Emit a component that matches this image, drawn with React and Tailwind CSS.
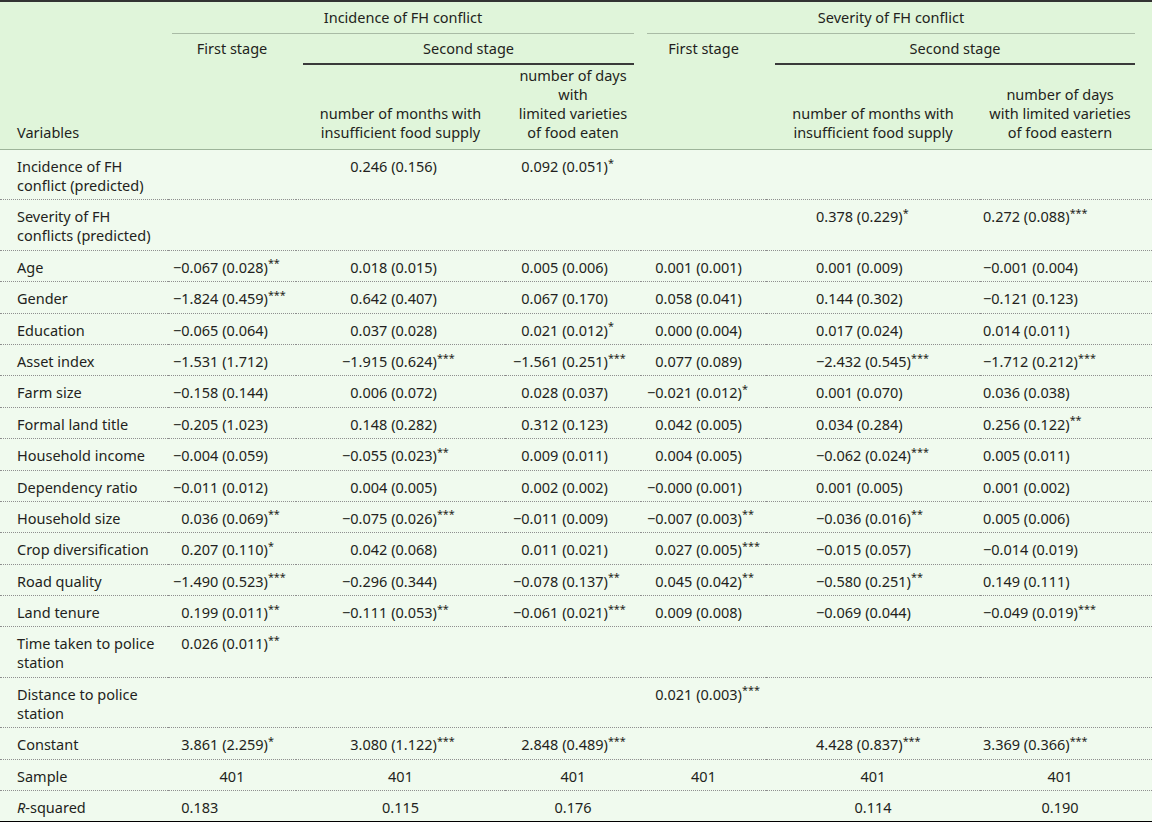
import React from 'react';

const MINUS = '\u2212';

const rows = [
  { label: ['Incidence of FH', 'conflict (predicted)'], v: ['', '0.246 (0.156)', '0.092 (0.051)*', '', '', ''] },
  { label: ['Severity of FH', 'conflicts (predicted)'], v: ['', '', '', '', '0.378 (0.229)*', '0.272 (0.088)***'] },
  { label: ['Age'], v: ['−0.067 (0.028)**', '0.018 (0.015)', '0.005 (0.006)', '0.001 (0.001)', '0.001 (0.009)', '−0.001 (0.004)'] },
  { label: ['Gender'], v: ['−1.824 (0.459)***', '0.642 (0.407)', '0.067 (0.170)', '0.058 (0.041)', '0.144 (0.302)', '−0.121 (0.123)'] },
  { label: ['Education'], v: ['−0.065 (0.064)', '0.037 (0.028)', '0.021 (0.012)*', '0.000 (0.004)', '0.017 (0.024)', '0.014 (0.011)'] },
  { label: ['Asset index'], v: ['−1.531 (1.712)', '−1.915 (0.624)***', '−1.561 (0.251)***', '0.077 (0.089)', '−2.432 (0.545)***', '−1.712 (0.212)***'] },
  { label: ['Farm size'], v: ['−0.158 (0.144)', '0.006 (0.072)', '0.028 (0.037)', '−0.021 (0.012)*', '0.001 (0.070)', '0.036 (0.038)'] },
  { label: ['Formal land title'], v: ['−0.205 (1.023)', '0.148 (0.282)', '0.312 (0.123)', '0.042 (0.005)', '0.034 (0.284)', '0.256 (0.122)**'] },
  { label: ['Household income'], v: ['−0.004 (0.059)', '−0.055 (0.023)**', '0.009 (0.011)', '0.004 (0.005)', '−0.062 (0.024)***', '0.005 (0.011)'] },
  { label: ['Dependency ratio'], v: ['−0.011 (0.012)', '0.004 (0.005)', '0.002 (0.002)', '−0.000 (0.001)', '0.001 (0.005)', '0.001 (0.002)'] },
  { label: ['Household size'], v: ['0.036 (0.069)**', '−0.075 (0.026)***', '−0.011 (0.009)', '−0.007 (0.003)**', '−0.036 (0.016)**', '0.005 (0.006)'] },
  { label: ['Crop diversification'], v: ['0.207 (0.110)*', '0.042 (0.068)', '0.011 (0.021)', '0.027 (0.005)***', '−0.015 (0.057)', '−0.014 (0.019)'] },
  { label: ['Road quality'], v: ['−1.490 (0.523)***', '−0.296 (0.344)', '−0.078 (0.137)**', '0.045 (0.042)**', '−0.580 (0.251)**', '0.149 (0.111)'] },
  { label: ['Land tenure'], v: ['0.199 (0.011)**', '−0.111 (0.053)**', '−0.061 (0.021)***', '0.009 (0.008)', '−0.069 (0.044)', '−0.049 (0.019)***'] },
  { label: ['Time taken to police', 'station'], v: ['0.026 (0.011)**', '', '', '', '', ''] },
  { label: ['Distance to police', 'station'], v: ['', '', '', '0.021 (0.003)***', '', ''] },
  { label: ['Constant'], v: ['3.861 (2.259)*', '3.080 (1.122)***', '2.848 (0.489)***', '', '4.428 (0.837)***', '3.369 (0.366)***'] },
];

// left padding per value column, and whether positives get a blank minus in front
const valueCols = [
  { pad: 'pl-[5px]', phantom: true },
  { pad: 'pl-[46px]', phantom: true },
  { pad: 'pl-[8px]', phantom: true },
  { pad: 'pl-[6px]', phantom: true },
  { pad: 'pl-[50px]', phantom: false },
  { pad: 'pl-[3px]', phantom: false },
];

function Val({ text, phantom }) {
  if (!text) return null;
  const m = text.match(/^(.*?)(\**)$/);
  const main = m[1];
  const stars = m[2];
  const neg = main.startsWith(MINUS);
  return (
    <span className="whitespace-nowrap">
      {phantom && !neg && <span className="invisible">{MINUS}</span>}
      {main}
      {stars && <sup>{stars}</sup>}
    </span>
  );
}

const cell = 'pt-[7px] pb-[4.4px] align-top border-b border-dotted border-[#8f8f8f]';
const last = 'pt-[7px] pb-[4.4px] align-top';

export default function App() {
  return (
    <div className="w-[1152px] bg-[#f0faee] border-t-2 border-b-[3px] border-t-[#333333] border-b-black font-['Noto_Sans',sans-serif] text-[14.5px] leading-[19px] text-[#231f20]">
      <table className="w-[1152px] table-fixed border-collapse">
        <colgroup>
          <col className="w-[168px]" />
          <col className="w-[128px]" />
          <col className="w-[209px]" />
          <col className="w-[136px]" />
          <col className="w-[125px]" />
          <col className="w-[214px]" />
          <col className="w-[172px]" />
        </colgroup>
        <thead className="bg-[#e0f5da]">
          <tr>
            <th rowSpan={3} className="align-bottom text-left font-normal pl-[17px] pb-[7px] border-b border-[#9db499]">
              Variables
            </th>
            <th colSpan={3} className="p-0 font-normal align-top">
              <div className="ml-[4px] mr-[7px] pt-[6px] pb-[6px] border-b border-[#a9bba5] text-center">
                Incidence of FH conflict
              </div>
            </th>
            <th colSpan={3} className="p-0 font-normal align-top">
              <div className="ml-[6px] mr-[17px] pt-[6px] pb-[6px] border-b border-[#a9bba5] text-center">
                Severity of FH conflict
              </div>
            </th>
          </tr>
          <tr>
            <th className="font-normal align-top pt-[5px] text-center">First stage</th>
            <th colSpan={2} className="p-0 font-normal align-top">
              <div className="ml-[7px] mr-[7px] pt-[5px] pb-[5px] border-b-2 border-[#3a3a3a] text-center">
                Second stage
              </div>
            </th>
            <th className="font-normal align-top pt-[5px] text-center">First stage</th>
            <th colSpan={2} className="p-0 font-normal align-top">
              <div className="ml-[9px] mr-[17px] pt-[5px] pb-[5px] border-b-2 border-[#3a3a3a] text-center">
                Second stage
              </div>
            </th>
          </tr>
          <tr>
            <th className="border-b border-[#9db499]" />
            <th className="font-normal align-bottom text-center pb-[7px] border-b border-[#9db499]">
              number of months with
              <br />
              insufficient food supply
            </th>
            <th className="font-normal align-bottom text-center pt-[1px] pb-[7px] border-b border-[#9db499]">
              number of days
              <br />
              with
              <br />
              limited varieties
              <br />
              of food eaten
            </th>
            <th className="border-b border-[#9db499]" />
            <th className="font-normal align-bottom text-center pb-[7px] border-b border-[#9db499]">
              number of months with
              <br />
              insufficient food supply
            </th>
            <th className="font-normal align-bottom text-center pr-[12px] pb-[7px] border-b border-[#9db499]">
              number of days
              <br />
              with limited varieties
              <br />
              of food eastern
            </th>
          </tr>
        </thead>
        <tbody>
          {rows.map((row) => (
            <tr key={row.label.join(' ')}>
              <td className={`${cell} pl-[17px] text-left`}>
                {row.label.map((l, i) => (
                  <div key={i}>{l}</div>
                ))}
              </td>
              {row.v.map((v, i) => (
                <td key={i} className={`${cell} ${valueCols[i].pad} text-left`}>
                  <Val text={v} phantom={valueCols[i].phantom} />
                </td>
              ))}
            </tr>
          ))}
          <tr>
            <td className={`${cell} pl-[17px] text-left`}>Sample</td>
            <td className={`${cell} text-center`}>401</td>
            <td className={`${cell} text-center`}>401</td>
            <td className={`${cell} text-center`}>401</td>
            <td className={`${cell} text-center`}>401</td>
            <td className={`${cell} text-center`}>401</td>
            <td className={`${cell} text-center pr-[12px]`}>401</td>
          </tr>
          <tr>
            <td className={`${last} pl-[17px] text-left`}>
              <span className="italic">R</span>-squared
            </td>
            <td className={`${last} pl-[5px] text-left`}>
              <span className="invisible">{MINUS}</span>0.183
            </td>
            <td className={`${last} text-center`}>0.115</td>
            <td className={`${last} text-center`}>0.176</td>
            <td className={last} />
            <td className={`${last} text-center`}>0.114</td>
            <td className={`${last} text-center pr-[12px]`}>0.190</td>
          </tr>
        </tbody>
      </table>
    </div>
  );
}
